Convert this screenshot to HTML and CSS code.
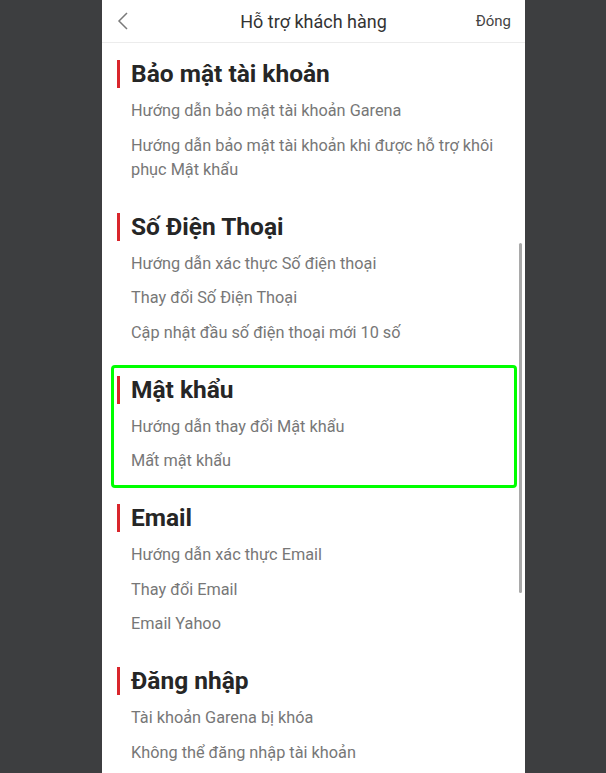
FILE: index.html
```html
<!DOCTYPE html>
<html lang="vi">
<head>
<meta charset="utf-8">
<link rel="stylesheet" href="styles.css">
</head>
<body>
<div class="panel">
  <header class="topbar">
    <span class="back"><svg width="12" height="18" viewBox="0 0 12 18"><polyline points="10,1 2,9 10,17" fill="none" stroke="#7a7a7a" stroke-width="1.5"/></svg></span>
    <span class="title">Hỗ trợ khách hàng</span>
    <span class="close">Đóng</span>
  </header>
  <main class="content">
    <section class="group">
      <h2 class="heading">Bảo mật tài khoản</h2>
      <ul class="items">
        <li>Hướng dẫn bảo mật tài khoản Garena</li>
        <li>Hướng dẫn bảo mật tài khoản khi được hỗ trợ khôi phục Mật khẩu</li>
      </ul>
    </section>
    <section class="group">
      <h2 class="heading">Số Điện Thoại</h2>
      <ul class="items">
        <li>Hướng dẫn xác thực Số điện thoại</li>
        <li>Thay đổi Số Điện Thoại</li>
        <li>Cập nhật đầu số điện thoại mới 10 số</li>
      </ul>
    </section>
    <section class="group highlight">
      <h2 class="heading">Mật khẩu</h2>
      <ul class="items">
        <li>Hướng dẫn thay đổi Mật khẩu</li>
        <li>Mất mật khẩu</li>
      </ul>
    </section>
    <section class="group">
      <h2 class="heading">Email</h2>
      <ul class="items">
        <li>Hướng dẫn xác thực Email</li>
        <li>Thay đổi Email</li>
        <li>Email Yahoo</li>
      </ul>
    </section>
    <section class="group">
      <h2 class="heading">Đăng nhập</h2>
      <ul class="items">
        <li>Tài khoản Garena bị khóa</li>
        <li>Không thể đăng nhập tài khoản</li>
      </ul>
    </section>
  </main>
  <div class="scrollbar"></div>
</div>
</body>
</html>
```
FILE: styles.css
```css
html, body {
  margin: 0;
  padding: 0;
  height: 100%;
  overflow: hidden;
}
body {
  background: #3d3e40;
  font-family: Roboto, "Noto Sans", sans-serif;
}
.panel {
  position: relative;
  margin-left: 102px;
  width: 423px;
  height: 773px;
  background: #fff;
  overflow: hidden;
}
.topbar {
  height: 42px;
  border-bottom: 1px solid #ececec;
  display: flex;
  align-items: center;
  justify-content: space-between;
  padding: 0 14px 0 15px;
  position: relative;
}
.back {
  display: flex;
  align-items: center;
  height: 18px;
}
.title {
  position: absolute;
  left: 0;
  right: 0;
  text-align: center;
  font-size: 18px;
  color: #333;
  pointer-events: none;
}
.close {
  font-size: 15px;
  color: #444;
}
.content {
  padding: 17px 20px 0 15px;
  display: flex;
  flex-direction: column;
  gap: 31px;
}
.group {
  position: relative;
}
.heading {
  margin: 0;
  font-size: 24.5px;
  line-height: 28px;
  font-weight: 700;
  color: #262626;
  border-left: 3px solid #d9262c;
  padding-left: 11px;
}
.items {
  list-style: none;
  margin: 11px 0 0;
  padding: 0 0 0 14px;
  display: flex;
  flex-direction: column;
  gap: 10.5px;
}
.items li {
  font-size: 16.3px;
  line-height: 24px;
  color: #777;
}
.highlight::after {
  content: "";
  position: absolute;
  left: -6px;
  right: -12px;
  top: -11px;
  bottom: -15px;
  border: 3px solid #00ff00;
  border-radius: 4px;
}
.scrollbar {
  position: absolute;
  left: 417px;
  top: 243px;
  width: 3px;
  height: 350px;
  border-radius: 2px;
  background: #a9a9a9;
}
```
